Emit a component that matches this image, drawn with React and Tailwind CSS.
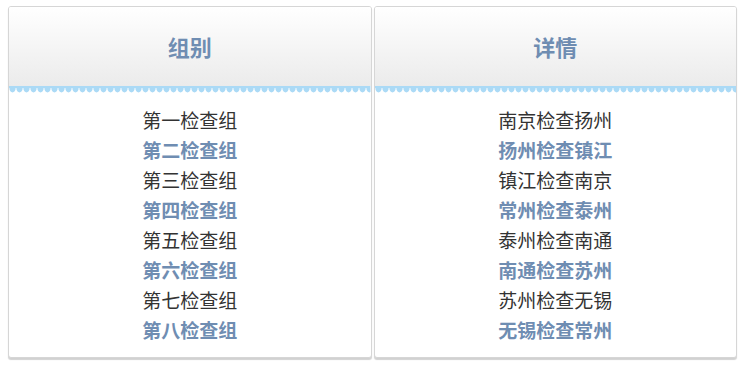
const rows = [
  ["第一检查组", "南京检查扬州"],
  ["第二检查组", "扬州检查镇江"],
  ["第三检查组", "镇江检查南京"],
  ["第四检查组", "常州检查泰州"],
  ["第五检查组", "泰州检查南通"],
  ["第六检查组", "南通检查苏州"],
  ["第七检查组", "苏州检查无锡"],
  ["第八检查组", "无锡检查常州"],
];

// blue scalloped strip under each header
function Scallop() {
  return (
    <svg className="block w-full h-[7px]">
      <defs>
        <pattern id="scallop" width="7" height="7" patternUnits="userSpaceOnUse">
          <rect x="0" y="0" width="7" height="2" fill="#abdaf6" />
          <path d="M0.3 1.5 C0.3 8 6.7 8 6.7 1.5 Z" fill="#abdaf6" />
        </pattern>
      </defs>
      <rect width="100%" height="7" fill="url(#scallop)" />
    </svg>
  );
}

function Panel({ title, items }) {
  return (
    <div className="flex-1 flex flex-col rounded-[3px] border border-[#d6d6d6] bg-white shadow-[0_2px_1px_rgba(0,0,0,0.18)] overflow-hidden">
      <div className="h-[79px] flex items-center justify-center bg-gradient-to-b from-white to-[#ebebeb] text-[22px] font-bold text-[#6f8db2]">
        {title}
      </div>
      <Scallop />
      <div className="flex-1 pt-[12px] flex flex-col items-center">
        {items.map((t, i) => (
          <div
            key={t}
            className={
              i % 2 === 1
                ? "h-[30px] leading-[30px] text-[19px] font-bold text-[#6f8db2]"
                : "h-[30px] leading-[30px] text-[19px] text-[#333]"
            }
          >
            {t}
          </div>
        ))}
      </div>
    </div>
  );
}

export default function App() {
  return (
    <div
      className="w-[744px] h-[369px] bg-white pl-[8px] pt-[6px]"
      style={{ fontFamily: '"Noto Sans CJK SC", "Noto Sans", sans-serif' }}
    >
      <div className="w-[729px] h-[352px] flex gap-[2px]">
        <Panel title="组别" items={rows.map((r) => r[0])} />
        <Panel title="详情" items={rows.map((r) => r[1])} />
      </div>
    </div>
  );
}
